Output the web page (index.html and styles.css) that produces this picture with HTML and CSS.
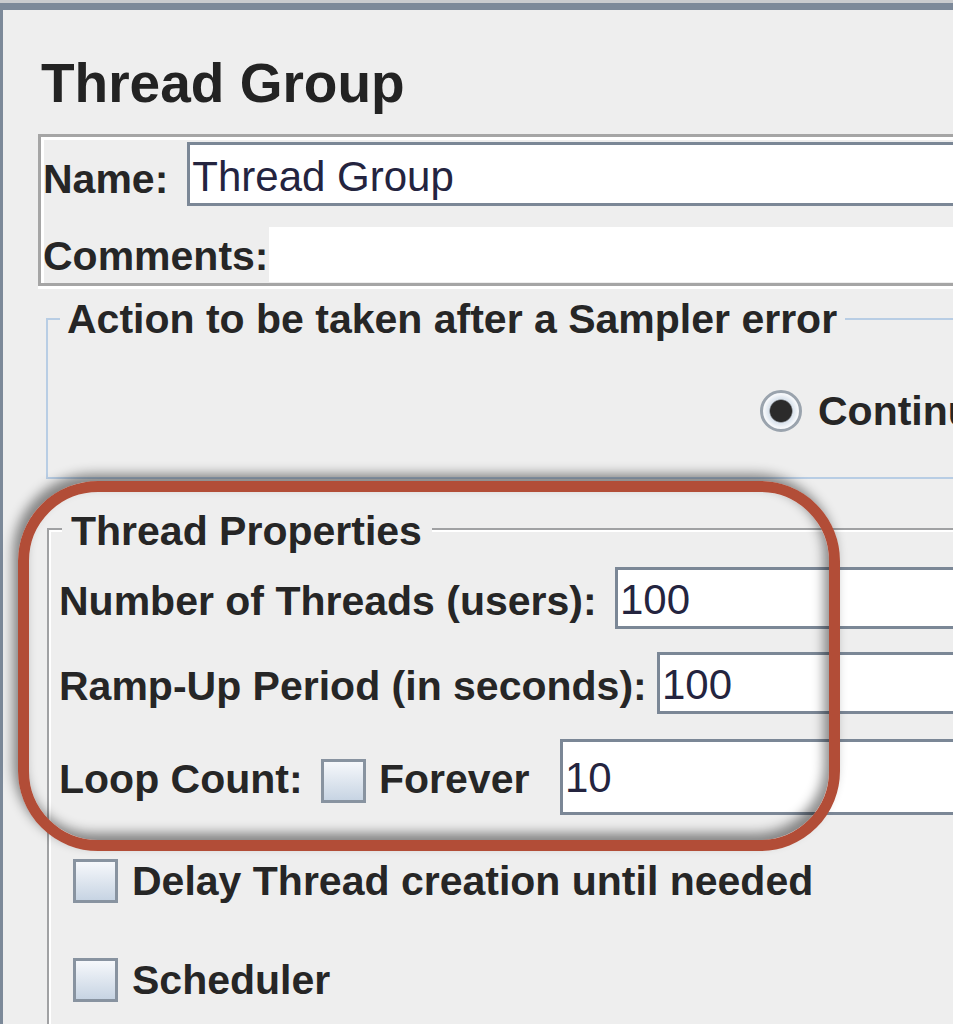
FILE: index.html
```html
<!DOCTYPE html>
<html lang="en">
<head>
<meta charset="utf-8">
<title>Thread Group</title>
<link rel="stylesheet" href="styles.css">
</head>
<body>
<div class="window">
  <div class="frame">
    <h1 class="title">Thread Group</h1>

    <div class="name-panel">
      <div class="name-row">
        <span class="label name-label">Name:</span>
        <div class="field name-field">Thread Group</div>
      </div>
      <div class="comments-row">
        <span class="label comments-label">Comments:</span>
        <div class="comments-area"></div>
      </div>
    </div>

    <section class="action-group">
      <div class="group-head">
        <span class="corner action-corner"></span>
        <span class="group-title action-title">Action to be taken after a Sampler error</span>
        <span class="hline action-line"></span>
      </div>
      <div class="action-body">
        <div class="radio-row">
          <span class="radio checked"></span>
          <span class="label radio-label">Continue</span>
          <span class="radio"></span>
          <span class="label radio-label">Start Next Thread Loop</span>
        </div>
      </div>
    </section>

    <section class="tp-group">
      <div class="group-head">
        <span class="corner tp-corner"></span>
        <span class="group-title tp-title">Thread Properties</span>
        <span class="hline tp-line"></span>
      </div>
      <div class="tp-body">
        <div class="prop-row row-threads">
          <span class="label cell-threads">Number of Threads (users):</span>
          <div class="field prop-field">100</div>
        </div>
        <div class="prop-row row-ramp">
          <span class="label cell-ramp">Ramp-Up Period (in seconds):</span>
          <div class="field prop-field">100</div>
        </div>
        <div class="prop-row row-loop">
          <span class="label cell-loop">Loop Count:</span>
          <span class="checkbox loop-check"></span>
          <span class="label cell-forever">Forever</span>
          <div class="field loop-field">10</div>
        </div>
        <div class="check-row row-delay">
          <span class="checkbox"></span>
          <span class="label check-label">Delay Thread creation until needed</span>
        </div>
        <div class="check-row row-scheduler">
          <span class="checkbox"></span>
          <span class="label check-label">Scheduler</span>
        </div>
      </div>
    </section>
  </div>

  <div class="annotation"></div>
</div>
</body>
</html>
```

FILE: styles.css
```css
html, body {
  margin: 0;
  padding: 0;
  background: #ffffff;
}

body {
  font-family: "Liberation Sans", Arial, sans-serif;
  color: #262626;
}

.window {
  position: relative;
  width: 953px;
  height: 1024px;
  box-sizing: border-box;
  border-top: 3px solid #c9cbce;
  overflow: hidden;
}

.frame {
  height: 1021px;
  box-sizing: border-box;
  border-top: 7px solid #7c8999;
  border-left: 3px solid #7c8999;
  background: #eeeeee;
  overflow: hidden;
}

.title {
  margin: 46px 0 0 38px;
  font-size: 55px;
  line-height: 55px;
  font-weight: 700;
  color: #232323;
  white-space: nowrap;
}

.label {
  font-size: 41px;
  line-height: 44px;
  font-weight: 700;
  white-space: nowrap;
  flex-shrink: 0;
}

/* Name / Comments panel */
.name-panel {
  margin: 23px 0 0 35px;
  border: 3px solid #a5a5a5;
  border-right: 0;
  box-shadow: inset 3px 3px 0 #ffffff, 0 3px 0 #ffffff;
  padding: 5px 0 1px 2px;
}

.name-row {
  display: flex;
  align-items: flex-start;
  height: 64px;
}

.name-label {
  margin-top: 15px;
  margin-right: 19px;
}

.field {
  flex: 1;
  min-width: 0;
  box-sizing: border-box;
  background: #ffffff;
  border: 3px solid #7b8796;
  border-right: 0;
  padding-left: 2px;
  font-size: 42px;
  line-height: 48px;
  font-weight: 400;
  color: #24243f;
  white-space: nowrap;
}

.name-field {
  height: 64px;
  padding-top: 8px;
}

.comments-row {
  display: flex;
  align-items: flex-start;
  margin-top: 21px;
  height: 55px;
}

.comments-label {
  margin-top: 7px;
}

.comments-area {
  flex: 1;
  height: 55px;
  background: #ffffff;
}

/* Titled groups */
.group-head {
  display: flex;
  align-items: center;
  height: 44px;
  white-space: nowrap;
}

.corner {
  align-self: flex-end;
  height: 23px;
  box-sizing: border-box;
  flex-shrink: 0;
}

.hline {
  flex: 1;
  height: 2px;
}

.group-title {
  font-size: 41px;
  line-height: 44px;
  font-weight: 700;
  flex-shrink: 0;
}

.action-group {
  margin: 11px 0 0 43px;
}

.action-corner {
  width: 14px;
  border-top: 2px solid #b8cde4;
  border-left: 2px solid #b8cde4;
}

.action-title {
  padding: 0 8px 0 7px;
}

.action-line {
  background: #b8cde4;
}

.action-body {
  height: 88px;
  padding: 48px 0 0 712px;
  border-left: 2px solid #b8cde4;
  border-bottom: 2px solid #b8cde4;
}

.radio-row {
  display: flex;
  align-items: center;
  height: 44px;
  white-space: nowrap;
}

.radio {
  flex-shrink: 0;
  width: 42px;
  height: 42px;
  box-sizing: border-box;
  border-radius: 50%;
  border: 3px solid #9aa3ad;
  background: radial-gradient(circle at center, #f4f7fa 0, #e2e9f1 100%);
}

.radio.checked {
  background: radial-gradient(circle at center, #2b2b2b 0, #2b2b2b 10.5px, #d9e2ec 12px, #f6f8fb 17px);
}

.radio-label {
  margin: 0 40px 0 16px;
}

.tp-group {
  margin: 28px 0 0 44px;
}

.tp-corner {
  width: 15px;
  border-top: 2px solid #a0a1a3;
  border-left: 2px solid #a0a1a3;
  box-shadow: inset 2px 2px 0 #ffffff;
}

.tp-title {
  padding: 4px 10px 0 9px;
}

.tp-line {
  background: #a0a1a3;
  box-shadow: 0 2px 0 #ffffff;
}

.tp-body {
  height: 520px;
  border-left: 2px solid #a0a1a3;
  box-shadow: inset 2px 0 0 #ffffff;
  padding: 16px 0 0 10px;
}

.prop-row {
  display: flex;
  align-items: flex-start;
}

.row-threads,
.row-ramp {
  height: 62px;
}

.row-ramp {
  margin-top: 23px;
}

.row-loop {
  height: 76px;
  margin-top: 25px;
}

.cell-threads {
  width: 556px;
  margin-top: 12px;
}

.cell-ramp {
  width: 598px;
  margin-top: 12px;
}

.cell-loop {
  width: 262px;
  margin-top: 18px;
}

.cell-forever {
  width: 181px;
  padding-left: 13px;
  margin-top: 18px;
}

.prop-field {
  height: 62px;
  padding-top: 6px;
}

.loop-field {
  height: 76px;
  padding-top: 12px;
}

.checkbox {
  flex-shrink: 0;
  width: 45px;
  height: 44px;
  box-sizing: border-box;
  border: 3px solid #8893a0;
  background: linear-gradient(#f6f8fb, #c7d4e3);
}

.loop-check {
  margin-top: 20px;
}

.check-row {
  display: flex;
  align-items: center;
  margin-left: 14px;
}

.row-delay {
  margin-top: 44px;
}

.row-scheduler {
  margin-top: 55px;
}

.check-label {
  margin-left: 14px;
}

/* Red annotation ring drawn over the screenshot */
.annotation {
  position: absolute;
  left: 18px;
  top: 478px;
  width: 822px;
  height: 370px;
  box-sizing: border-box;
  border: 11px solid #b24d37;
  border-radius: 80px;
  box-shadow: -5px -7px 12px rgba(0, 0, 0, 0.45), inset -5px -7px 12px rgba(0, 0, 0, 0.45);
  pointer-events: none;
}
```
